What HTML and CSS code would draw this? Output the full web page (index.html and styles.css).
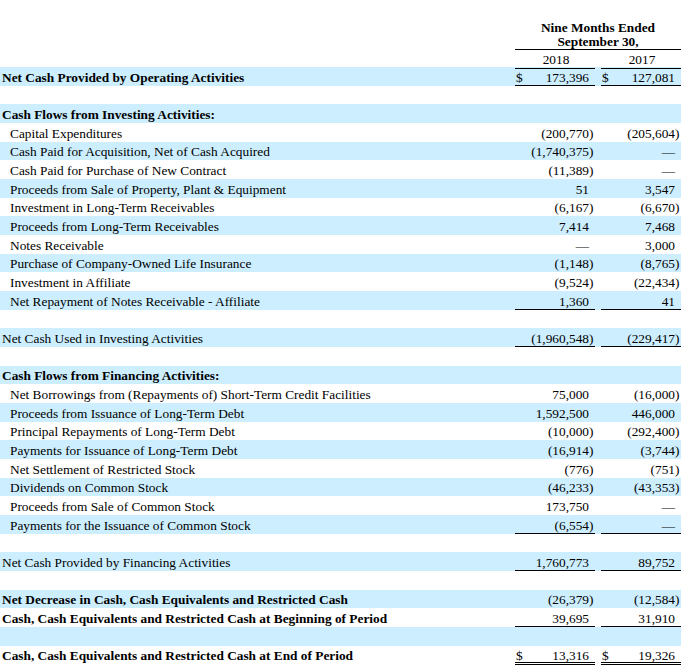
FILE: index.html
```html
<!DOCTYPE html>
<html>
<head>
<meta charset="utf-8">
<link rel="stylesheet" href="styles.css">
</head>
<body>
<div class="sheet">
  <div class="head">
    <div></div>
    <div class="period">Nine Months Ended<br>September 30,</div>
  </div>
  <div class="years">
    <div></div>
    <div class="year">2018</div>
    <div></div>
    <div class="year">2017</div>
  </div>

  <div class="row blue bold"><div class="lbl">Net Cash Provided by Operating Activities</div><div class="val reg ul"><span class="cur">$</span><span class="num">173,396</span><span class="par"></span></div><div></div><div class="val reg ul"><span class="cur">$</span><span class="num">127,081</span><span class="par"></span></div></div>
  <div class="row"></div>
  <div class="row blue bold"><div class="lbl">Cash Flows from Investing Activities:</div></div>
  <div class="row"><div class="lbl ind">Capital Expenditures</div><div class="val"><span class="num">(200,770</span><span class="par">)</span></div><div></div><div class="val"><span class="num">(205,604</span><span class="par">)</span></div></div>
  <div class="row blue"><div class="lbl ind">Cash Paid for Acquisition, Net of Cash Acquired</div><div class="val"><span class="num">(1,740,375</span><span class="par">)</span></div><div></div><div class="val"><span class="num">—</span><span class="par"></span></div></div>
  <div class="row"><div class="lbl ind">Cash Paid for Purchase of New Contract</div><div class="val"><span class="num">(11,389</span><span class="par">)</span></div><div></div><div class="val"><span class="num">—</span><span class="par"></span></div></div>
  <div class="row blue"><div class="lbl ind">Proceeds from Sale of Property, Plant &amp; Equipment</div><div class="val"><span class="num">51</span><span class="par"></span></div><div></div><div class="val"><span class="num">3,547</span><span class="par"></span></div></div>
  <div class="row"><div class="lbl ind">Investment in Long-Term Receivables</div><div class="val"><span class="num">(6,167</span><span class="par">)</span></div><div></div><div class="val"><span class="num">(6,670</span><span class="par">)</span></div></div>
  <div class="row blue"><div class="lbl ind">Proceeds from Long-Term Receivables</div><div class="val"><span class="num">7,414</span><span class="par"></span></div><div></div><div class="val"><span class="num">7,468</span><span class="par"></span></div></div>
  <div class="row"><div class="lbl ind">Notes Receivable</div><div class="val"><span class="num">—</span><span class="par"></span></div><div></div><div class="val"><span class="num">3,000</span><span class="par"></span></div></div>
  <div class="row blue"><div class="lbl ind">Purchase of Company-Owned Life Insurance</div><div class="val"><span class="num">(1,148</span><span class="par">)</span></div><div></div><div class="val"><span class="num">(8,765</span><span class="par">)</span></div></div>
  <div class="row"><div class="lbl ind">Investment in Affiliate</div><div class="val"><span class="num">(9,524</span><span class="par">)</span></div><div></div><div class="val"><span class="num">(22,434</span><span class="par">)</span></div></div>
  <div class="row blue"><div class="lbl ind">Net Repayment of Notes Receivable - Affiliate</div><div class="val ul"><span class="num">1,360</span><span class="par"></span></div><div></div><div class="val ul"><span class="num">41</span><span class="par"></span></div></div>
  <div class="row"></div>
  <div class="row blue"><div class="lbl">Net Cash Used in Investing Activities</div><div class="val ul"><span class="num">(1,960,548</span><span class="par">)</span></div><div></div><div class="val ul"><span class="num">(229,417</span><span class="par">)</span></div></div>
  <div class="row"></div>
  <div class="row blue bold"><div class="lbl">Cash Flows from Financing Activities:</div></div>
  <div class="row"><div class="lbl ind">Net Borrowings from (Repayments of) Short-Term Credit Facilities</div><div class="val"><span class="num">75,000</span><span class="par"></span></div><div></div><div class="val"><span class="num">(16,000</span><span class="par">)</span></div></div>
  <div class="row blue"><div class="lbl ind">Proceeds from Issuance of Long-Term Debt</div><div class="val"><span class="num">1,592,500</span><span class="par"></span></div><div></div><div class="val"><span class="num">446,000</span><span class="par"></span></div></div>
  <div class="row"><div class="lbl ind">Principal Repayments of Long-Term Debt</div><div class="val"><span class="num">(10,000</span><span class="par">)</span></div><div></div><div class="val"><span class="num">(292,400</span><span class="par">)</span></div></div>
  <div class="row blue"><div class="lbl ind">Payments for Issuance of Long-Term Debt</div><div class="val"><span class="num">(16,914</span><span class="par">)</span></div><div></div><div class="val"><span class="num">(3,744</span><span class="par">)</span></div></div>
  <div class="row"><div class="lbl ind">Net Settlement of Restricted Stock</div><div class="val"><span class="num">(776</span><span class="par">)</span></div><div></div><div class="val"><span class="num">(751</span><span class="par">)</span></div></div>
  <div class="row blue"><div class="lbl ind">Dividends on Common Stock</div><div class="val"><span class="num">(46,233</span><span class="par">)</span></div><div></div><div class="val"><span class="num">(43,353</span><span class="par">)</span></div></div>
  <div class="row"><div class="lbl ind">Proceeds from Sale of Common Stock</div><div class="val"><span class="num">173,750</span><span class="par"></span></div><div></div><div class="val"><span class="num">—</span><span class="par"></span></div></div>
  <div class="row blue"><div class="lbl ind">Payments for the Issuance of Common Stock</div><div class="val ul"><span class="num">(6,554</span><span class="par">)</span></div><div></div><div class="val ul"><span class="num">—</span><span class="par"></span></div></div>
  <div class="row"></div>
  <div class="row blue"><div class="lbl">Net Cash Provided by Financing Activities</div><div class="val ul"><span class="num">1,760,773</span><span class="par"></span></div><div></div><div class="val ul"><span class="num">89,752</span><span class="par"></span></div></div>
  <div class="row"></div>
  <div class="row blue bold"><div class="lbl">Net Decrease in Cash, Cash Equivalents and Restricted Cash</div><div class="val reg"><span class="num">(26,379</span><span class="par">)</span></div><div></div><div class="val reg"><span class="num">(12,584</span><span class="par">)</span></div></div>
  <div class="row bold"><div class="lbl">Cash, Cash Equivalents and Restricted Cash at Beginning of Period</div><div class="val reg ul"><span class="num">39,695</span><span class="par"></span></div><div></div><div class="val reg ul"><span class="num">31,910</span><span class="par"></span></div></div>
  <div class="row blue"></div>
  <div class="row bold"><div class="lbl">Cash, Cash Equivalents and Restricted Cash at End of Period</div><div class="val reg dbl"><span class="cur">$</span><span class="num">13,316</span><span class="par"></span></div><div></div><div class="val reg dbl"><span class="cur">$</span><span class="num">19,326</span><span class="par"></span></div></div>
</div>
</body>
</html>
```

FILE: styles.css
```css
html, body {
  margin: 0;
  padding: 0;
  background: #ffffff;
}

body {
  font-family: "Liberation Serif", "Times New Roman", serif;
  font-size: 13.33px;
  color: #000000;
}

.sheet {
  width: 681px;
}

.head {
  display: grid;
  grid-template-columns: 515px 166px;
  height: 49px;
  box-sizing: border-box;
  padding-top: 20.5px;
}

.period {
  font-weight: bold;
  text-align: center;
  line-height: 14.25px;
  border-bottom: 1px solid #000;
}

.years {
  display: grid;
  grid-template-columns: 515px 80px 6px 80px;
  height: 18px;
  line-height: 17px;
}

.year {
  text-align: center;
  border-bottom: 1px solid #000;
  box-sizing: border-box;
  padding-left: 2px;
  padding-top: 1.5px;
}

.row {
  display: grid;
  grid-template-columns: 515px 80px 6px 80px;
  height: 18.68px;
  line-height: 18.68px;
  white-space: nowrap;
}

.row > div {
  padding-top: 1.5px;
}

.blue {
  background: #cceeff;
}

.bold {
  font-weight: bold;
}

.lbl {
  padding-left: 2px;
}

.lbl.ind {
  padding-left: 10px;
}

.val {
  display: flex;
  box-sizing: border-box;
  height: 18.68px;
  padding-left: 1px;
}

.val.reg {
  font-weight: normal;
}

.val.ul {
  border-bottom: 1px solid #000;
}

.val.dbl {
  border-bottom: 3px double #000;
}

.cur {
  flex: none;
}

.num {
  flex: 1;
  text-align: right;
}

.par {
  flex: none;
  width: 6px;
}
```
